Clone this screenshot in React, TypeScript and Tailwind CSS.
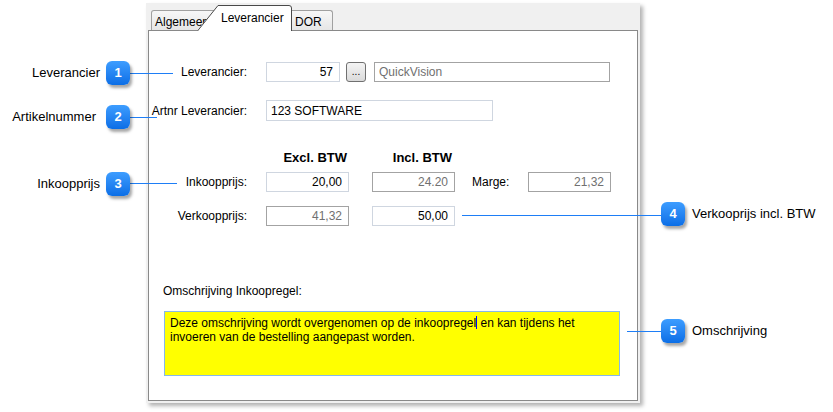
import React from 'react';

const font = "font-['Liberation_Sans',Arial,sans-serif]";

const Badge: React.FC<{ n: number; left: string; top: string }> = ({ n, left, top }) => (
  <div
    className={`absolute ${left} ${top} w-[24px] h-[24px] rounded-[6px] bg-gradient-to-b from-[#3d9dff] to-[#0a6ee6] shadow-[2px_3px_3px_rgba(0,0,0,0.35)] flex items-center justify-center text-white text-[13px] font-bold`}
  >
    {n}
  </div>
);

const Field: React.FC<{ value: string; width: string; readOnly?: boolean; align?: 'left' | 'right' }> = ({
  value,
  width,
  readOnly,
  align = 'right',
}) => (
  <div
    className={`${width} h-[20px] bg-white border flex items-center text-[12px] ${
      readOnly ? 'border-[#a3a3a3] text-[#707070]' : 'border-[#cfd6e0] text-black'
    } ${align === 'right' ? 'justify-end pr-[6px]' : 'justify-start pl-[4px]'}`}
  >
    {value}
  </div>
);

const Label: React.FC<{ children: React.ReactNode }> = ({ children }) => (
  <div className="w-[98px] text-right text-[12px] text-black whitespace-nowrap">{children}</div>
);

export default function App() {
  return (
    <div className={`relative w-[833px] h-[412px] bg-white overflow-hidden ${font}`}>
      <div className="pt-[3px] pl-[146px]">
        <div className="w-[494px] h-[400px] bg-[#f0f0f0] shadow-[3px_3px_4px_rgba(0,0,0,0.3)] flex flex-col">
          {/* tabs */}
          <div className="h-[27px] flex items-end pl-[5px] text-[12px]">
            <div className="w-[70px] h-[20px] border border-b-0 border-[#a0a0a0] rounded-tl-[3px] bg-gradient-to-b from-[#f7f7f7] to-[#e6e6e6] pl-[3px] pt-[2px] whitespace-nowrap overflow-hidden">
              Algemeen
            </div>
            <div className="relative z-10 ml-[-24px] mb-[-1px] w-[95px] h-[26px]">
              <svg className="absolute inset-0" width="95" height="26" viewBox="0 0 95 26">
                <path d="M0 26 L21 0.5 H92 Q94.5 0.5 94.5 3 V26 Z" fill="#ffffff" />
                <path d="M0.5 26 L21 0.5 H92 Q94.5 0.5 94.5 3 V26" fill="none" stroke="#4a4a4a" strokeWidth="1" />
              </svg>
              <div className="relative pl-[24px] pt-[4px] text-black">Leverancier</div>
            </div>
            <div className="ml-[-5px] w-[46px] h-[20px] border border-b-0 border-[#a0a0a0] rounded-tr-[3px] bg-gradient-to-b from-[#f7f7f7] to-[#e6e6e6] pl-[7px] pt-[2px]">
              DOR
            </div>
          </div>

          {/* page */}
          <div className="mx-[2px] h-[371px] bg-white border border-[#898989] flex flex-col pt-[31px]">
            <div className="flex items-center h-[20px]">
              <Label>Leverancier:</Label>
              <div className="ml-[19px]">
                <Field value="57" width="w-[74px]" />
              </div>
              <div className="ml-[6px] w-[20px] h-[20px] rounded-[3px] border border-[#707070] bg-gradient-to-b from-[#f4f4f4] to-[#dadada] flex items-end justify-center text-[10px] leading-none pb-[4px]">
                ...
              </div>
              <div className="ml-[8px]">
                <Field value="QuickVision" width="w-[236px]" readOnly align="left" />
              </div>
            </div>

            <div className="flex items-center h-[21px] mt-[18px]">
              <Label>Artnr Leverancier:</Label>
              <div className="ml-[19px]">
                <div className="w-[227px] h-[21px] bg-white border border-[#cfd6e0] flex items-center pl-[4px] text-[12px]">
                  123 SOFTWARE
                </div>
              </div>
            </div>

            <div className="flex h-[15px] leading-[15px] mt-[29px] pl-[117px] text-[13px] font-bold">
              <div className="w-[83px] text-right pr-[2px]">Excl. BTW</div>
              <div className="ml-[23px] w-[83px] text-right pr-[3px]">Incl. BTW</div>
            </div>

            <div className="flex items-center h-[20px] mt-[7px]">
              <Label>Inkoopprijs:</Label>
              <div className="ml-[19px]">
                <Field value="20,00" width="w-[83px]" />
              </div>
              <div className="ml-[23px]">
                <Field value="24.20" width="w-[83px]" readOnly />
              </div>
              <div className="ml-[17px] w-[56px] text-[12px]">Marge:</div>
              <Field value="21,32" width="w-[83px]" readOnly />
            </div>

            <div className="flex items-center h-[20px] mt-[14px]">
              <Label>Verkoopprijs:</Label>
              <div className="ml-[19px]">
                <Field value="41,32" width="w-[83px]" readOnly />
              </div>
              <div className="ml-[23px]">
                <Field value="50,00" width="w-[83px]" />
              </div>
            </div>

            <div className="mt-[58px] h-[15px] leading-[15px] pl-[14px] text-[12px]">Omschrijving Inkoopregel:</div>

            <div className="mt-[12px] ml-[15px] w-[456px] h-[65px] bg-[#ffff00] border border-[#86b8ea] pt-[4px] pl-[5px] text-[12px] leading-[14px] text-black">
              Deze omschrijving wordt overgenomen op de inkoopregel
              <span className="inline-block w-[1px] h-[13px] bg-[#0000ff] align-[-2px]" /> en kan tijdens het
              <br />
              invoeren van de bestelling aangepast worden.
            </div>
          </div>
        </div>
      </div>

      {/* annotation layer */}
      <div className="absolute left-[130px] top-[73px] w-[43px] h-[1px] bg-[#1e7ef6]" />
      <div className="absolute left-[130px] top-[117px] w-[27px] h-[1px] bg-[#1e7ef6]" />
      <div className="absolute left-[130px] top-[183px] w-[47px] h-[1px] bg-[#1e7ef6]" />
      <div className="absolute left-[462px] top-[215px] w-[200px] h-[1px] bg-[#1e7ef6]" />
      <div className="absolute left-[627px] top-[331px] w-[35px] h-[1px] bg-[#1e7ef6]" />

      <Badge n={1} left="left-[106px]" top="top-[61px]" />
      <Badge n={2} left="left-[106px]" top="top-[105px]" />
      <Badge n={3} left="left-[106px]" top="top-[172px]" />
      <Badge n={4} left="left-[661px]" top="top-[202px]" />
      <Badge n={5} left="left-[661px]" top="top-[319px]" />

      <div className="absolute right-[733px] top-[65px] text-[13px] leading-[16px] whitespace-nowrap">Leverancier</div>
      <div className="absolute right-[733px] top-[109px] text-[13px] leading-[16px] whitespace-nowrap pr-[4px]">Artikelnummer</div>
      <div className="absolute right-[733px] top-[176px] text-[13px] leading-[16px] whitespace-nowrap">Inkoopprijs</div>
      <div className="absolute left-[692px] top-[206px] text-[13px] leading-[16px] whitespace-nowrap">Verkooprijs incl. BTW</div>
      <div className="absolute left-[692px] top-[323px] text-[13px] leading-[16px] whitespace-nowrap">Omschrijving</div>
    </div>
  );
}
